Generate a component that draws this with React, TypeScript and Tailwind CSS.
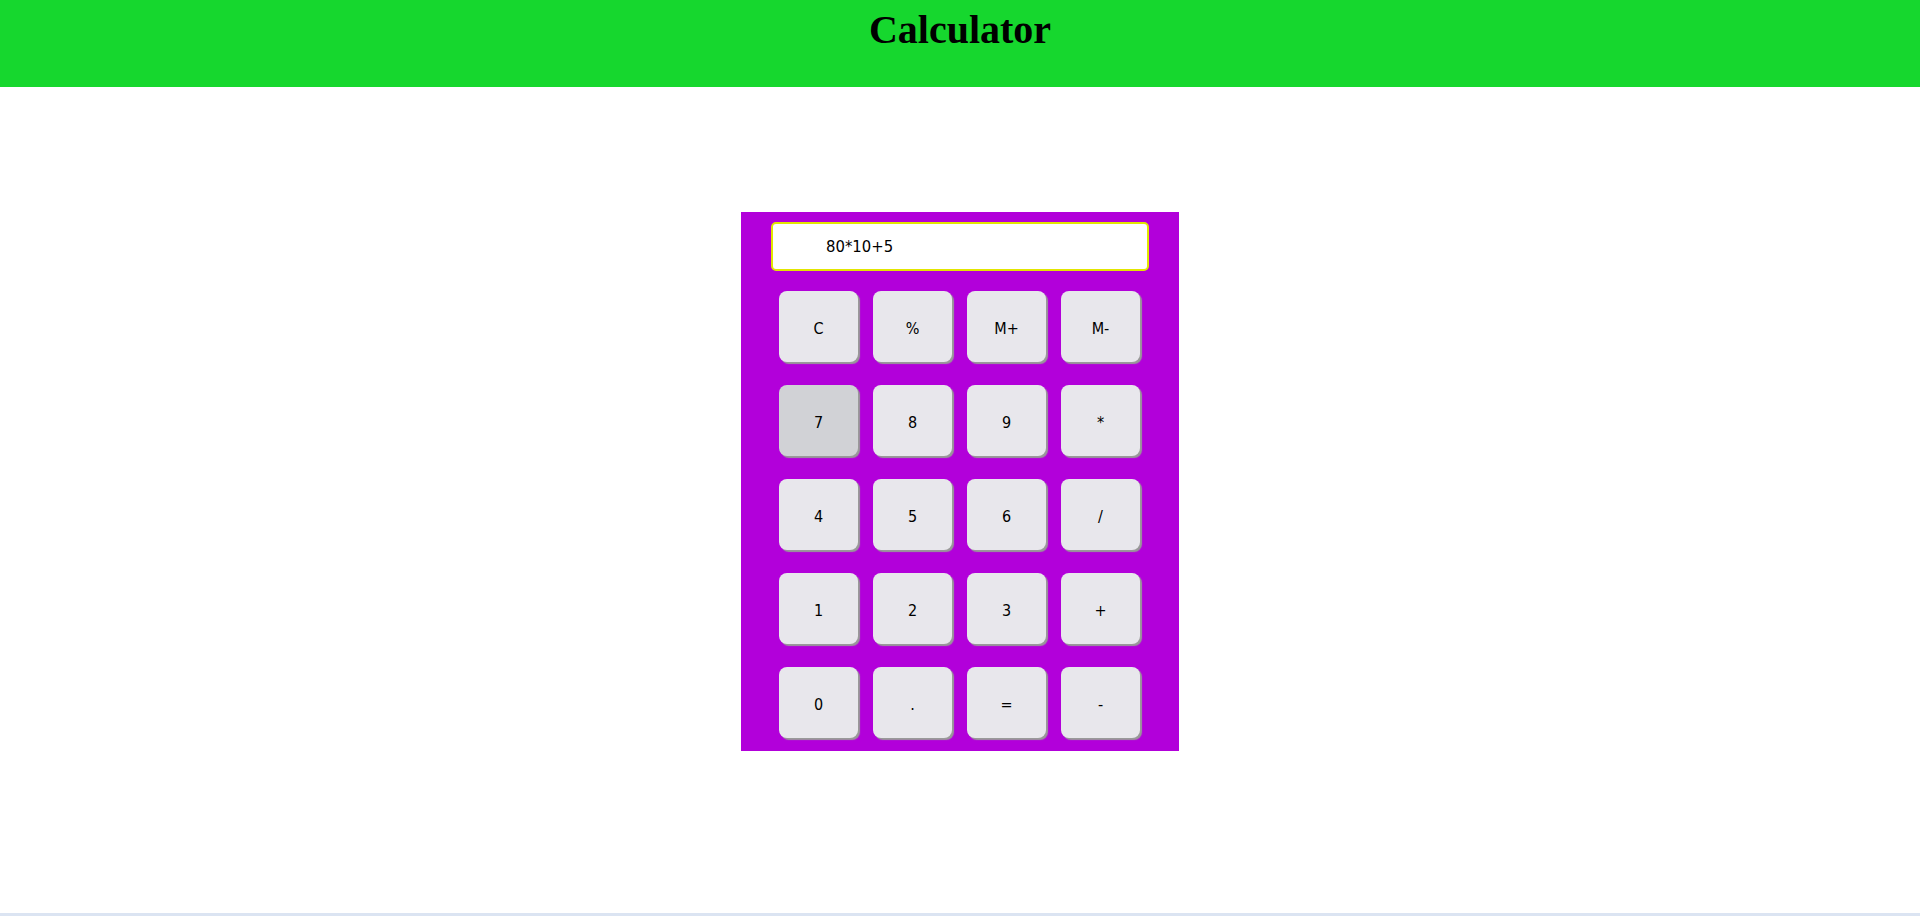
const keys = ["C", "%", "M+", "M-", "7", "8", "9", "*", "4", "5", "6", "/", "1", "2", "3", "+", "0", ".", "=", "-"];

export default function App() {
  return (
    <div className="h-screen flex flex-col bg-white">
      <header className="h-[87px] shrink-0 bg-[#16d72e] pt-[8px] text-center">
        <h1 className="text-[40px] leading-[44px] font-bold text-black font-['Liberation_Serif',serif]">
          Calculator
        </h1>
      </header>

      <main className="flex-1">
        <div className="mx-auto mt-[125px] w-[438px] bg-[#b200da] pt-[10px] pb-[13px]">
          <div className="mx-[30px] h-[49px] rounded-[5px] border-2 border-[#e2e600] bg-white pl-[53px] pt-[2px] flex items-center">
            <span className="text-[16.5px] text-black font-['DejaVu_Sans_Condensed','DejaVu_Sans',sans-serif]">80*10+5</span>
          </div>
          <div className="mt-[20px] ml-[38px] grid grid-cols-[repeat(4,80px)] gap-x-[14px] gap-y-[23px]">
            {keys.map((k) => (
              <button
                key={k}
                className={
                  "w-[79px] h-[71px] pt-[4px] rounded-[8px] shadow-[2px_2px_1px_#999] text-[16px] text-black font-['DejaVu_Sans_Condensed','DejaVu_Sans',sans-serif] flex items-center justify-center " +
                  (k === "7" ? "bg-[#d1d2d6]" : "bg-[#e8e7ec]")
                }
              >
                {k}
              </button>
            ))}
          </div>
        </div>
      </main>

      <div className="h-[3px] shrink-0 bg-[#dbe4f2]" />
    </div>
  );
}
